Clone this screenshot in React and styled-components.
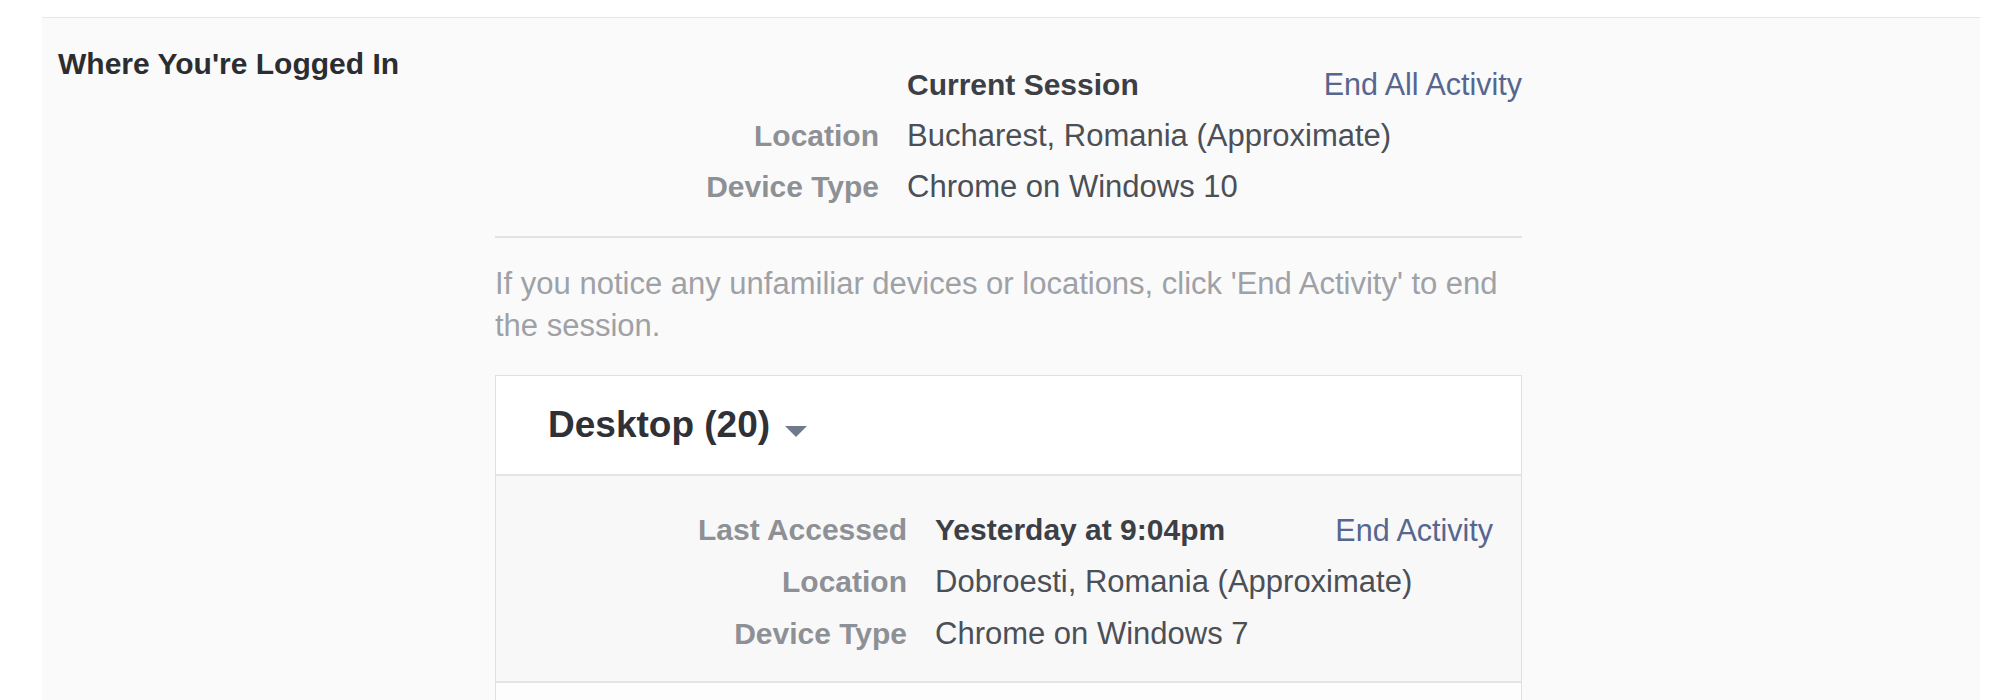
import React from 'react';
import styled, { createGlobalStyle } from 'styled-components';

const GlobalStyle = createGlobalStyle`
  body {
    margin: 0;
    background: #ffffff;
    font-family: "Liberation Sans", Arial, sans-serif;
  }
`;

const Section = styled.section`
  display: flex;
  margin: 17px 29px 0 42px;
  border-top: 1px solid #e6e7e9;
  background: #fafafa;
  min-height: 700px;
`;

const SectionTitle = styled.h2`
  flex: 0 0 453px;
  box-sizing: border-box;
  margin: 0;
  padding: 28px 0 0 16px;
  font-size: 30px;
  line-height: 36px;
  font-weight: 700;
  color: #2b2d31;
`;

const SectionBody = styled.div`
  flex: 0 0 1027px;
  width: 1027px;
  padding-top: 41px;
`;

const Row = styled.div`
  display: grid;
  grid-template-columns: ${p => p.labelWidth}px 1fr;
  column-gap: 28px;
  line-height: ${p => p.height}px;
`;

const Label = styled.div`
  text-align: right;
  font-weight: 700;
  font-size: 30px;
  color: #8d9095;
  white-space: nowrap;
`;

const ValueCell = styled.div`
  display: flex;
  justify-content: space-between;
  min-width: 0;
`;

const Value = styled.span`
  color: ${p => (p.strong ? '#3c3f45' : '#4b4f56')};
  font-weight: ${p => (p.strong ? 700 : 400)};
  font-size: ${p => (p.strong ? '30px' : '31px')};
  white-space: nowrap;
`;

const Action = styled.a`
  color: #56668f;
  font-size: 30.5px;
  text-decoration: none;
  white-space: nowrap;
  cursor: pointer;
`;

const Divider = styled.hr`
  margin: 24px 0 0;
  border: 0;
  height: 2px;
  background: #e1e2e4;
`;

const Notice = styled.p`
  margin: 25px 0 0;
  font-size: 31px;
  line-height: 42px;
  color: #9ea1a6;
`;

const DeviceCard = styled.div`
  margin-top: 28px;
  border: 1px solid #dfe0e3;
  border-bottom: 0;
  background: #ffffff;
`;

const CardHeader = styled.div`
  display: flex;
  align-items: center;
  height: 100px;
  box-sizing: border-box;
  padding-left: 52px;
  border-bottom: 2px solid #e3e4e6;
  font-size: 37px;
  line-height: 44px;
  font-weight: 700;
  color: #2f3136;
`;

const Caret = styled.svg`
  margin-left: 15px;
  margin-top: 13px;
  width: 22px;
  height: 11px;
  fill: #6f7a8c;
`;

const SessionItem = styled.div`
  padding: 28px 28px 21px;
  background: #f8f8f8;
  border-bottom: 2px solid #e3e4e6;
`;

const NextItem = styled.div`
  height: 40px;
  background: #fdfdfd;
`;

function InfoRow({ label, value, strong, action, labelWidth, height }) {
  return (
    <Row labelWidth={labelWidth} height={height}>
      <Label>{label}</Label>
      <ValueCell>
        <Value strong={strong}>{value}</Value>
        {action && <Action>{action}</Action>}
      </ValueCell>
    </Row>
  );
}

const session = {
  lastAccessed: 'Yesterday at 9:04pm',
  location: 'Dobroesti, Romania (Approximate)',
  device: 'Chrome on Windows 7',
};

export default function App() {
  return (
    <>
      <GlobalStyle />
      <Section>
        <SectionTitle>Where You're Logged In</SectionTitle>

        <SectionBody>
          <InfoRow labelWidth={384} height={51} value="Current Session" strong action="End All Activity" />
          <InfoRow labelWidth={384} height={51} label="Location" value="Bucharest, Romania (Approximate)" />
          <InfoRow labelWidth={384} height={51} label="Device Type" value="Chrome on Windows 10" />

          <Divider />

          <Notice>
            If you notice any unfamiliar devices or locations, click 'End Activity' to end the session.
          </Notice>

          <DeviceCard>
            <CardHeader>
              Desktop (20)
              <Caret viewBox="0 0 22 11">
                <polygon points="0,0 22,0 11,11" />
              </Caret>
            </CardHeader>
            <SessionItem>
              <InfoRow labelWidth={383} height={52} label="Last Accessed" value={session.lastAccessed} strong action="End Activity" />
              <InfoRow labelWidth={383} height={52} label="Location" value={session.location} />
              <InfoRow labelWidth={383} height={52} label="Device Type" value={session.device} />
            </SessionItem>
            <NextItem />
          </DeviceCard>
        </SectionBody>
      </Section>
    </>
  );
}
